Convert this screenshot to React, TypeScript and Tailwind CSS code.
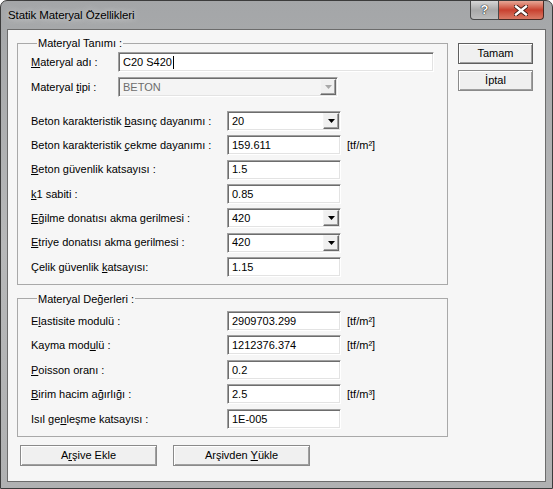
import type { ReactNode } from "react"

const U = ({ children }: { children: ReactNode }) => (
  <span className="underline underline-offset-[1px] decoration-[1px]">{children}</span>
)

function Arrow({ disabled }: { disabled?: boolean }) {
  return (
    <svg width="7" height="4" viewBox="0 0 7 4">
      <path d="M0 0h7L3.5 4z" fill={disabled ? "#a8a8a8" : "#000"} />
    </svg>
  )
}

interface FieldProps {
  value: string
  combo?: boolean
  disabled?: boolean
  width?: string
  caret?: boolean
}

function Field({ value, combo, disabled, width = "w-[114px]", caret }: FieldProps) {
  return (
    <div
      className={`flex h-5 ${width} shrink-0 items-stretch border border-t-[#a0a0a0] border-l-[#a0a0a0] border-b-white border-r-white shadow-[inset_1px_1px_0_#6d6d6d,inset_-1px_-1px_0_#e3e3e3] ${
        disabled ? "bg-[#f4f4f4]" : "bg-white"
      }`}
    >
      <div className={`flex flex-1 items-center pl-[4px] ${disabled ? "text-[#6d6d6d]" : "text-black"}`}>
        {value}
        {caret && <span className="ml-[1px] h-[13px] w-px bg-black" />}
      </div>
      {combo && (
        <div className="my-[1px] mr-[1px] flex w-[16px] items-center justify-center border border-t-[#f4f4f4] border-l-[#f4f4f4] border-b-[#696969] border-r-[#696969] bg-[#f0f0f0] shadow-[inset_-1px_-1px_0_#a0a0a0]">
          <Arrow disabled={disabled} />
        </div>
      )}
    </div>
  )
}

function Row({ label, children, unit }: { label: ReactNode; children: ReactNode; unit?: string }) {
  return (
    <div className="flex h-5 items-center">
      <div className="w-[196px] shrink-0">{label}</div>
      {children}
      {unit && <span className="ml-[6px]">{unit}</span>}
    </div>
  )
}

function Button({ children, isDefault, width }: { children: ReactNode; isDefault?: boolean; width: string }) {
  return (
    <button
      className={`flex h-[21px] ${width} items-center justify-center border ${
        isDefault ? "border-[#5f5f5f]" : "border-[#8a8a8a]"
      } bg-[#f0f0f0] shadow-[inset_1px_1px_0_#fff,inset_-1px_-1px_0_#a0a0a0]`}
    >
      <span>{children}</span>
    </button>
  )
}

export default function App() {
  return (
    <div className="flex h-[489px] w-[553px] flex-col overflow-hidden rounded-t-[7px] border border-[#3c3c3c] bg-gradient-to-b from-[#a4a6a8] via-[#b7b8b9] to-[#b0b1b2] font-['Liberation_Sans',Arial,sans-serif] text-[11px] text-black">
      {/* title bar */}
      <div className="flex h-[28px] shrink-0 items-start justify-between pl-[7px]">
        <div className="pt-[6px] text-[11.5px] tracking-[-0.1px] [text-shadow:0_0_6px_#e8e8e8]">Statik Materyal Özellikleri</div>
        <div className="mr-[8px] flex">
          <div className="flex h-[19px] w-[29px] items-center justify-center rounded-bl-[4px] border border-t-0 border-[#4a4a4a] bg-gradient-to-b from-[#d6d6d6] via-[#a9a9a9] to-[#bcbcbc] text-[13px] font-bold text-white [text-shadow:0_0_1px_#000,0_0_1px_#000]">
            ?
          </div>
          <div className="flex h-[19px] w-[45px] items-center justify-center rounded-br-[4px] border border-l-0 border-t-0 border-[#4a2a24] bg-gradient-to-b from-[#e6a696] via-[#c8402f] to-[#d97a66]">
            <svg width="14" height="11" viewBox="0 0 14 11">
              <path d="M2 1.5l10 8M12 1.5l-10 8" stroke="#3a1a14" strokeWidth="4.2" strokeLinecap="square" />
              <path d="M2 1.5l10 8M12 1.5l-10 8" stroke="#fff" strokeWidth="2.4" strokeLinecap="square" />
            </svg>
          </div>
        </div>
      </div>

      {/* client */}
      <div className="mx-[6px] mb-[6px] flex flex-1 border border-[#6c6c6c] bg-[#f6f6f6]">
        <div className="flex flex-col pl-[9px] pt-[6px]">
          <fieldset className="w-[431px] border border-[#a9a9a9] pb-[7px] pl-[13px] pt-[2px]">
            <legend className="ml-[6px] px-[1px] leading-[14px]">Materyal Tanımı :</legend>
            <div className="flex h-5 items-center">
              <div className="w-[87px] shrink-0">
                <U>M</U>ateryal adı :
              </div>
              <Field value="C20 S420" width="w-[316px]" caret />
            </div>
            <div className="mt-[5px] flex h-5 items-center">
              <div className="w-[87px] shrink-0">
                Materyal <U>t</U>ipi :
              </div>
              <Field value="BETON" width="w-[220px]" combo disabled />
            </div>
            <div className="mt-[14px] flex flex-col gap-[4.33px]">
              <Row label={<>Beton karakteristik <U>b</U>asınç dayanımı :</>}>
                <Field value="20" combo />
              </Row>
              <Row label={<>Beton karakteristik <U>ç</U>ekme dayanımı :</>} unit="[tf/m²]">
                <Field value="159.611" />
              </Row>
              <Row label={<><U>B</U>eton güvenlik katsayısı :</>}>
                <Field value="1.5" />
              </Row>
              <Row label={<><U>k</U>1 sabiti :</>}>
                <Field value="0.85" />
              </Row>
              <Row label={<><U>E</U>ğilme donatısı akma gerilmesi :</>}>
                <Field value="420" combo />
              </Row>
              <Row label={<><U>E</U>triye donatısı akma gerilmesi :</>}>
                <Field value="420" combo />
              </Row>
              <Row label={<>Çelik güvenlik <U>k</U>atsayısı:</>}>
                <Field value="1.15" />
              </Row>
            </div>
          </fieldset>

          <fieldset className="mt-[7px] w-[431px] border border-[#a9a9a9] pb-[7px] pl-[13px] pt-[5px]">
            <legend className="ml-[6px] px-[1px] leading-[14px]">Materyal Değerleri :</legend>
            <div className="flex flex-col gap-[4.5px]">
              <Row label={<>E<U>l</U>astisite modulü :</>} unit="[tf/m²]">
                <Field value="2909703.299" />
              </Row>
              <Row label={<>Kayma mod<U>u</U>lü :</>} unit="[tf/m²]">
                <Field value="1212376.374" />
              </Row>
              <Row label={<><U>P</U>oisson oranı :</>}>
                <Field value="0.2" />
              </Row>
              <Row label={<><U>B</U>irim hacim ağırlığı :</>} unit="[tf/m³]">
                <Field value="2.5" />
              </Row>
              <Row label={<>Isıl ge<U>n</U>leşme katsayısı :</>}>
                <Field value="1E-005" />
              </Row>
            </div>
          </fieldset>

          <div className="ml-[3px] mt-[8px] flex gap-[16px]">
            <Button width="w-[137px]">
              A<U>r</U>şive Ekle
            </Button>
            <Button width="w-[137px]">
              Arşivden <U>Y</U>ükle
            </Button>
          </div>
        </div>

        <div className="ml-[10px] flex flex-col gap-[6px] pt-[13px]">
          <Button width="w-[75px]" isDefault>
            Tamam
          </Button>
          <Button width="w-[75px]">İptal</Button>
        </div>
      </div>
    </div>
  )
}
